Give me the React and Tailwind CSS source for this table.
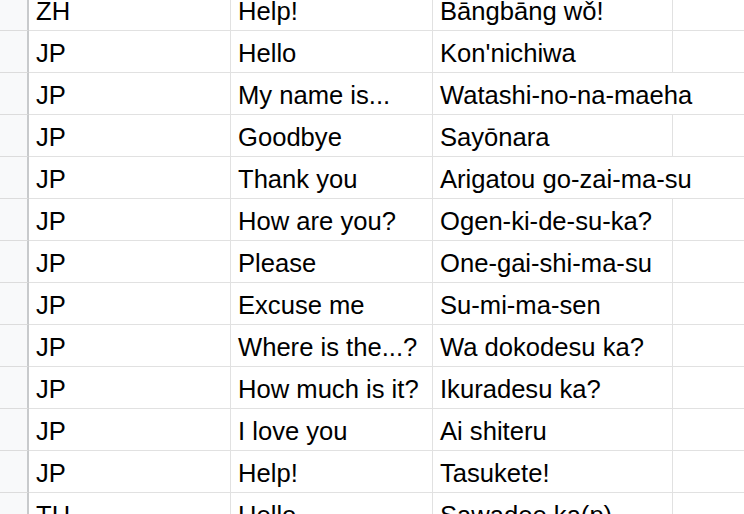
const rows = [
  ["ZH", "Help!", "Bāngbāng wǒ!", false],
  ["JP", "Hello", "Kon'nichiwa", false],
  ["JP", "My name is...", "Watashi-no-na-maeha", true],
  ["JP", "Goodbye", "Sayōnara", false],
  ["JP", "Thank you", "Arigatou go-zai-ma-su", true],
  ["JP", "How are you?", "Ogen-ki-de-su-ka?", false],
  ["JP", "Please", "One-gai-shi-ma-su", false],
  ["JP", "Excuse me", "Su-mi-ma-sen", false],
  ["JP", "Where is the...?", "Wa dokodesu ka?", false],
  ["JP", "How much is it?", "Ikuradesu ka?", false],
  ["JP", "I love you", "Ai shiteru", false],
  ["JP", "Help!", "Tasukete!", false],
  ["TH", "Hello", "Sawadee ka(p)", false],
];

export default function App() {
  return (
    <div
      className="w-[744px] h-[514px] overflow-hidden bg-white text-black"
      style={{ fontFamily: '"Liberation Sans", Arial, sans-serif' }}
    >
      <div className="-mt-[11px] flex flex-col">
        {rows.map(([a, b, c, overflow], i) => (
          <div
            key={i}
            className="grid grid-cols-[29px_202px_202px_240px_1fr] h-[42px] text-[25.6px] leading-[29px]"
          >
            <div className="bg-[#f8f9fa] border-r-2 border-r-[#c8cacc] border-b border-b-[#dcdcdc]" />
            <div className="border-r border-b border-[#e1e1e1] pl-[7px] pt-[8px] whitespace-nowrap">{a}</div>
            <div className="border-r border-b border-[#e1e1e1] pl-[7px] pt-[8px] whitespace-nowrap">{b}</div>
            <div
              className={
                overflow
                  ? "border-b border-[#e1e1e1] pl-[7px] pt-[8px] whitespace-nowrap overflow-visible relative z-10"
                  : "border-r border-b border-[#e1e1e1] pl-[7px] pt-[8px] whitespace-nowrap"
              }
            >
              {c}
            </div>
            <div className="border-b border-[#e1e1e1]" />
          </div>
        ))}
      </div>
    </div>
  );
}
